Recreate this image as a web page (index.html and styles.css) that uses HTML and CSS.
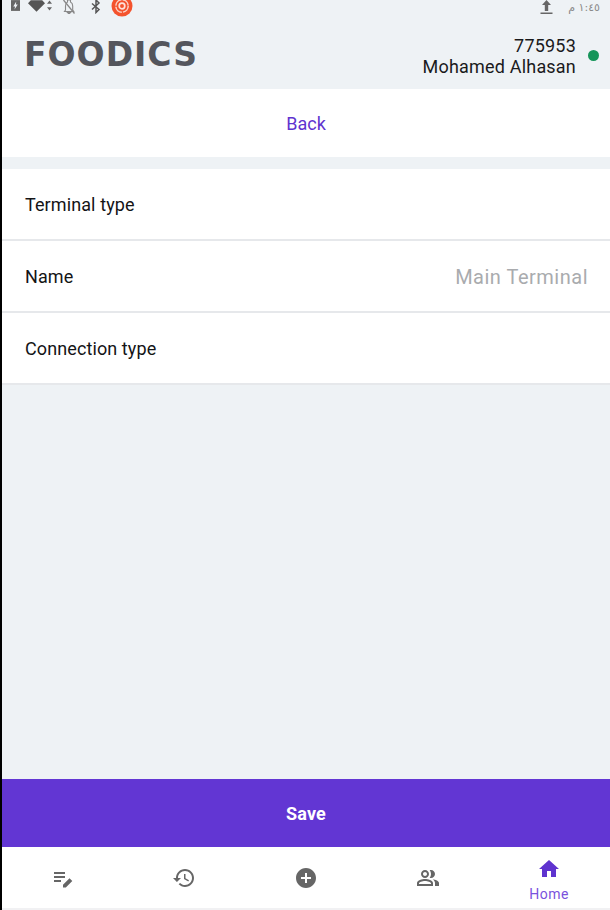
FILE: index.html
```html
<!DOCTYPE html>
<html lang="en">
<head>
<meta charset="utf-8">
<title>Foodics</title>
<link rel="stylesheet" href="styles.css">
</head>
<body>
<div class="app">
  <header class="top">
    <div class="status">
      <svg class="si bat" viewBox="0 0 10 12"><path d="M0 0h10v12H0z" fill="#666"/><path d="M5.800 1.500 2.500 7h2l-.6 3.500L7.500 5h-2z" fill="#eef1f5"/></svg>
      <svg class="si wifi" viewBox="0 0 18 12"><path d="M0 3 3 0h12l3 3-9 9z" fill="#555"/></svg>
      <svg class="si arrows" viewBox="0 0 6 12"><path d="M3 0 6 4H0zM3 12 0 8h6z" fill="#666"/></svg>
      <svg class="si bell" viewBox="0 0 14 14"><path d="M3.500 10V6q0-3 2-4V0h3v2q2.200 1 2.200 4v4l1 1.500H2.500zM5.500 12.500h3l-1.500 1.500z" fill="none" stroke="#888" stroke-width="1.100"/><path d="M1.500 0 12.500 13.500" stroke="#888" stroke-width="1.300"/></svg>
      <svg class="si bt" viewBox="0 0 10 14"><path d="M1 3.500 8 9.500 5 12.500V0l3 3-7 6.500" fill="none" stroke="#555" stroke-width="1.500"/></svg>
      <svg class="si rec" viewBox="0 0 22 17"><circle cx="11" cy="6" r="10.500" fill="#f4532d"/><circle cx="11" cy="6" r="6.200" fill="none" stroke="#fbd4c8" stroke-width="1.500" stroke-dasharray="8.500 1.200"/><circle cx="11" cy="6" r="2.800" fill="#f4532d" stroke="#fde3da" stroke-width="1.700"/></svg>
      <span class="spring"></span>
      <svg class="si up" viewBox="0 0 13 15"><path d="M6.500 0 11 5H8.200v6H4.800V5H2zM.5 12.500h12V14H.5z" fill="#666"/></svg>
      <span class="time" dir="rtl">١:٤٥ م</span>
    </div>
    <div class="brandbar">
      <span class="logo">FOODICS</span>
      <div class="user">
        <div class="user-text">
          <div>775953</div>
          <div>Mohamed Alhasan</div>
        </div>
        <span class="dot"></span>
      </div>
    </div>
  </header>

  <div class="back">Back</div>

  <main class="content">
    <section class="list">
      <div class="row"><span>Terminal type</span></div>
      <div class="row"><span>Name</span><span class="placeholder">Main Terminal</span></div>
      <div class="row"><span>Connection type</span></div>
    </section>
  </main>

  <div class="save">Save</div>

  <nav class="nav">
    <div class="tab">
      <svg class="ic" viewBox="0 0 24 24"><path d="M3 10h11v2H3zM3 6h11v2H3zM3 14h7v2H3zM12 21.500v-2.800l6.500-6.500 2.800 2.800-6.500 6.500z"/></svg>
    </div>
    <div class="tab">
      <svg class="ic" viewBox="0 0 24 24"><path d="M13 3c-4.970 0-9 4.030-9 9H1l3.890 3.890.07.14L9 12H6c0-3.870 3.130-7 7-7s7 3.130 7 7-3.130 7-7 7c-1.930 0-3.680-.79-4.940-2.060l-1.420 1.420C8.270 19.990 10.510 21 13 21c4.970 0 9-4.030 9-9s-4.030-9-9-9zm-1 5v5l4.280 2.540.72-1.210-3.500-2.080V8H12z"/></svg>
    </div>
    <div class="tab">
      <svg class="ic" viewBox="0 0 24 24"><path d="M12 2C6.480 2 2 6.480 2 12s4.480 10 10 10 10-4.480 10-10S17.520 2 12 2zm5 11h-4v4h-2v-4H7v-2h4V7h2v4h4v2z"/></svg>
    </div>
    <div class="tab">
      <svg class="ic" viewBox="0 0 24 24"><path d="M16.670 13.130C18.040 14.060 19 15.320 19 17v3h4v-3c0-2.180-3.570-3.470-6.330-3.870zM15 12c2.210 0 4-1.790 4-4s-1.790-4-4-4c-.47 0-.91.1-1.330.24C14.500 5.270 15 6.580 15 8s-.5 2.730-1.330 3.760c.42.14.86.24 1.330.24zM9 12c2.210 0 4-1.790 4-4s-1.790-4-4-4-4 1.790-4 4 1.790 4 4 4zm0-6c1.100 0 2 .9 2 2s-.9 2-2 2-2-.9-2-2 .9-2 2-2zM9 13c-2.670 0-8 1.340-8 4v3h16v-3c0-2.660-5.330-4-8-4zm6 5H3v-.99C3.200 16.290 6.300 15 9 15s5.800 1.290 6 2z"/></svg>
    </div>
    <div class="tab active">
      <svg class="ic" viewBox="0 0 24 24"><path d="M10 20v-6h4v6h5v-8h3L12 3 2 12h3v8z"/></svg>
      <span class="tab-label">Home</span>
    </div>
  </nav>
</div>
</body>
</html>
```

FILE: styles.css
```css
* { box-sizing: border-box; }
html, body { margin: 0; padding: 0; }
body {
  width: 610px;
  height: 910px;
  overflow: hidden;
  font-family: Roboto, "Liberation Sans", sans-serif;
  color: #1a1a1c;
  background: #fff;
}
.app {
  width: 610px;
  height: 910px;
  border-left: 2px solid #000;
  display: flex;
  flex-direction: column;
  background: #eef2f5;
}
.top { height: 88px; flex: none; background: #eef2f5; }
.status {
  height: 18px;
  display: flex;
  align-items: flex-start;
  padding-left: 9px;
  padding-right: 10px;
}
.si { display: block; flex: none; }
.bat { width: 9px; height: 11px; margin-right: 8px; }
.wifi { width: 17px; height: 12px; margin-right: 2px; }
.arrows { width: 5px; height: 11px; margin-right: 10px; }
.bell { width: 14px; height: 14px; margin-right: 15px; }
.bt { width: 10px; height: 14px; margin-right: 10px; }
.rec { width: 22px; height: 17px; }
.spring { flex: 1; }
.up { width: 13px; height: 15px; margin-right: 15px; }
.time { font-family: "DejaVu Sans", sans-serif; font-size: 11px; line-height: 15px; color: #8a8a8a; }
.brandbar {
  height: 70px;
  display: flex;
  align-items: center;
  justify-content: space-between;
  padding: 0 11px 0 22px;
}
.logo {
  font-family: "DejaVu Sans", sans-serif;
  font-weight: 700;
  font-size: 33px;
  letter-spacing: 1px;
  line-height: 40px;
  color: #54565d;
  padding-top: 4px;
}
.user { display: flex; align-items: center; gap: 12px; }
.user-text { text-align: right; font-size: 18px; letter-spacing: .2px; line-height: 21px; color: #1a1a1c; padding-top: 6px; }
.dot { width: 11px; height: 11px; border-radius: 50%; background: #16955a; margin-top: 5px; }
.back {
  height: 68px;
  flex: none;
  background: #fff;
  display: flex;
  align-items: center;
  justify-content: center;
  font-size: 18px;
  color: #5f33cf;
  margin-top: 1px;
}
.content { flex: 1; padding-top: 12px; }
.list { background: #fff; }
.row {
  height: 72px;
  display: flex;
  align-items: center;
  justify-content: space-between;
  padding: 0 22px 0 23px;
  font-size: 18px;
  letter-spacing: .1px;
  border-bottom: 2px solid #e6e8eb;
  color: #141416;
}
.placeholder { font-size: 20px; letter-spacing: .5px; color: #a9abae; padding-top: 1px; }
.save {
  height: 68px;
  flex: none;
  background: #6236d3;
  color: #fff;
  font-size: 18px;
  letter-spacing: .2px;
  font-weight: 700;
  display: flex;
  align-items: center;
  justify-content: center;
}
.nav {
  height: 63px;
  flex: none;
  background: #fff;
  border-bottom: 2px solid #f1f1f3;
  display: grid;
  grid-template-columns: repeat(5, 1fr);
}
.tab { display: flex; flex-direction: column; align-items: center; justify-content: center; }
.ic { width: 24px; height: 24px; fill: #666; display: block; }
.active .ic { fill: #5f33cf; }
.tab-label { font-size: 14px; letter-spacing: .5px; line-height: 18px; color: #7a52dd; margin-top: 4px; margin-bottom: -4px; }
```
